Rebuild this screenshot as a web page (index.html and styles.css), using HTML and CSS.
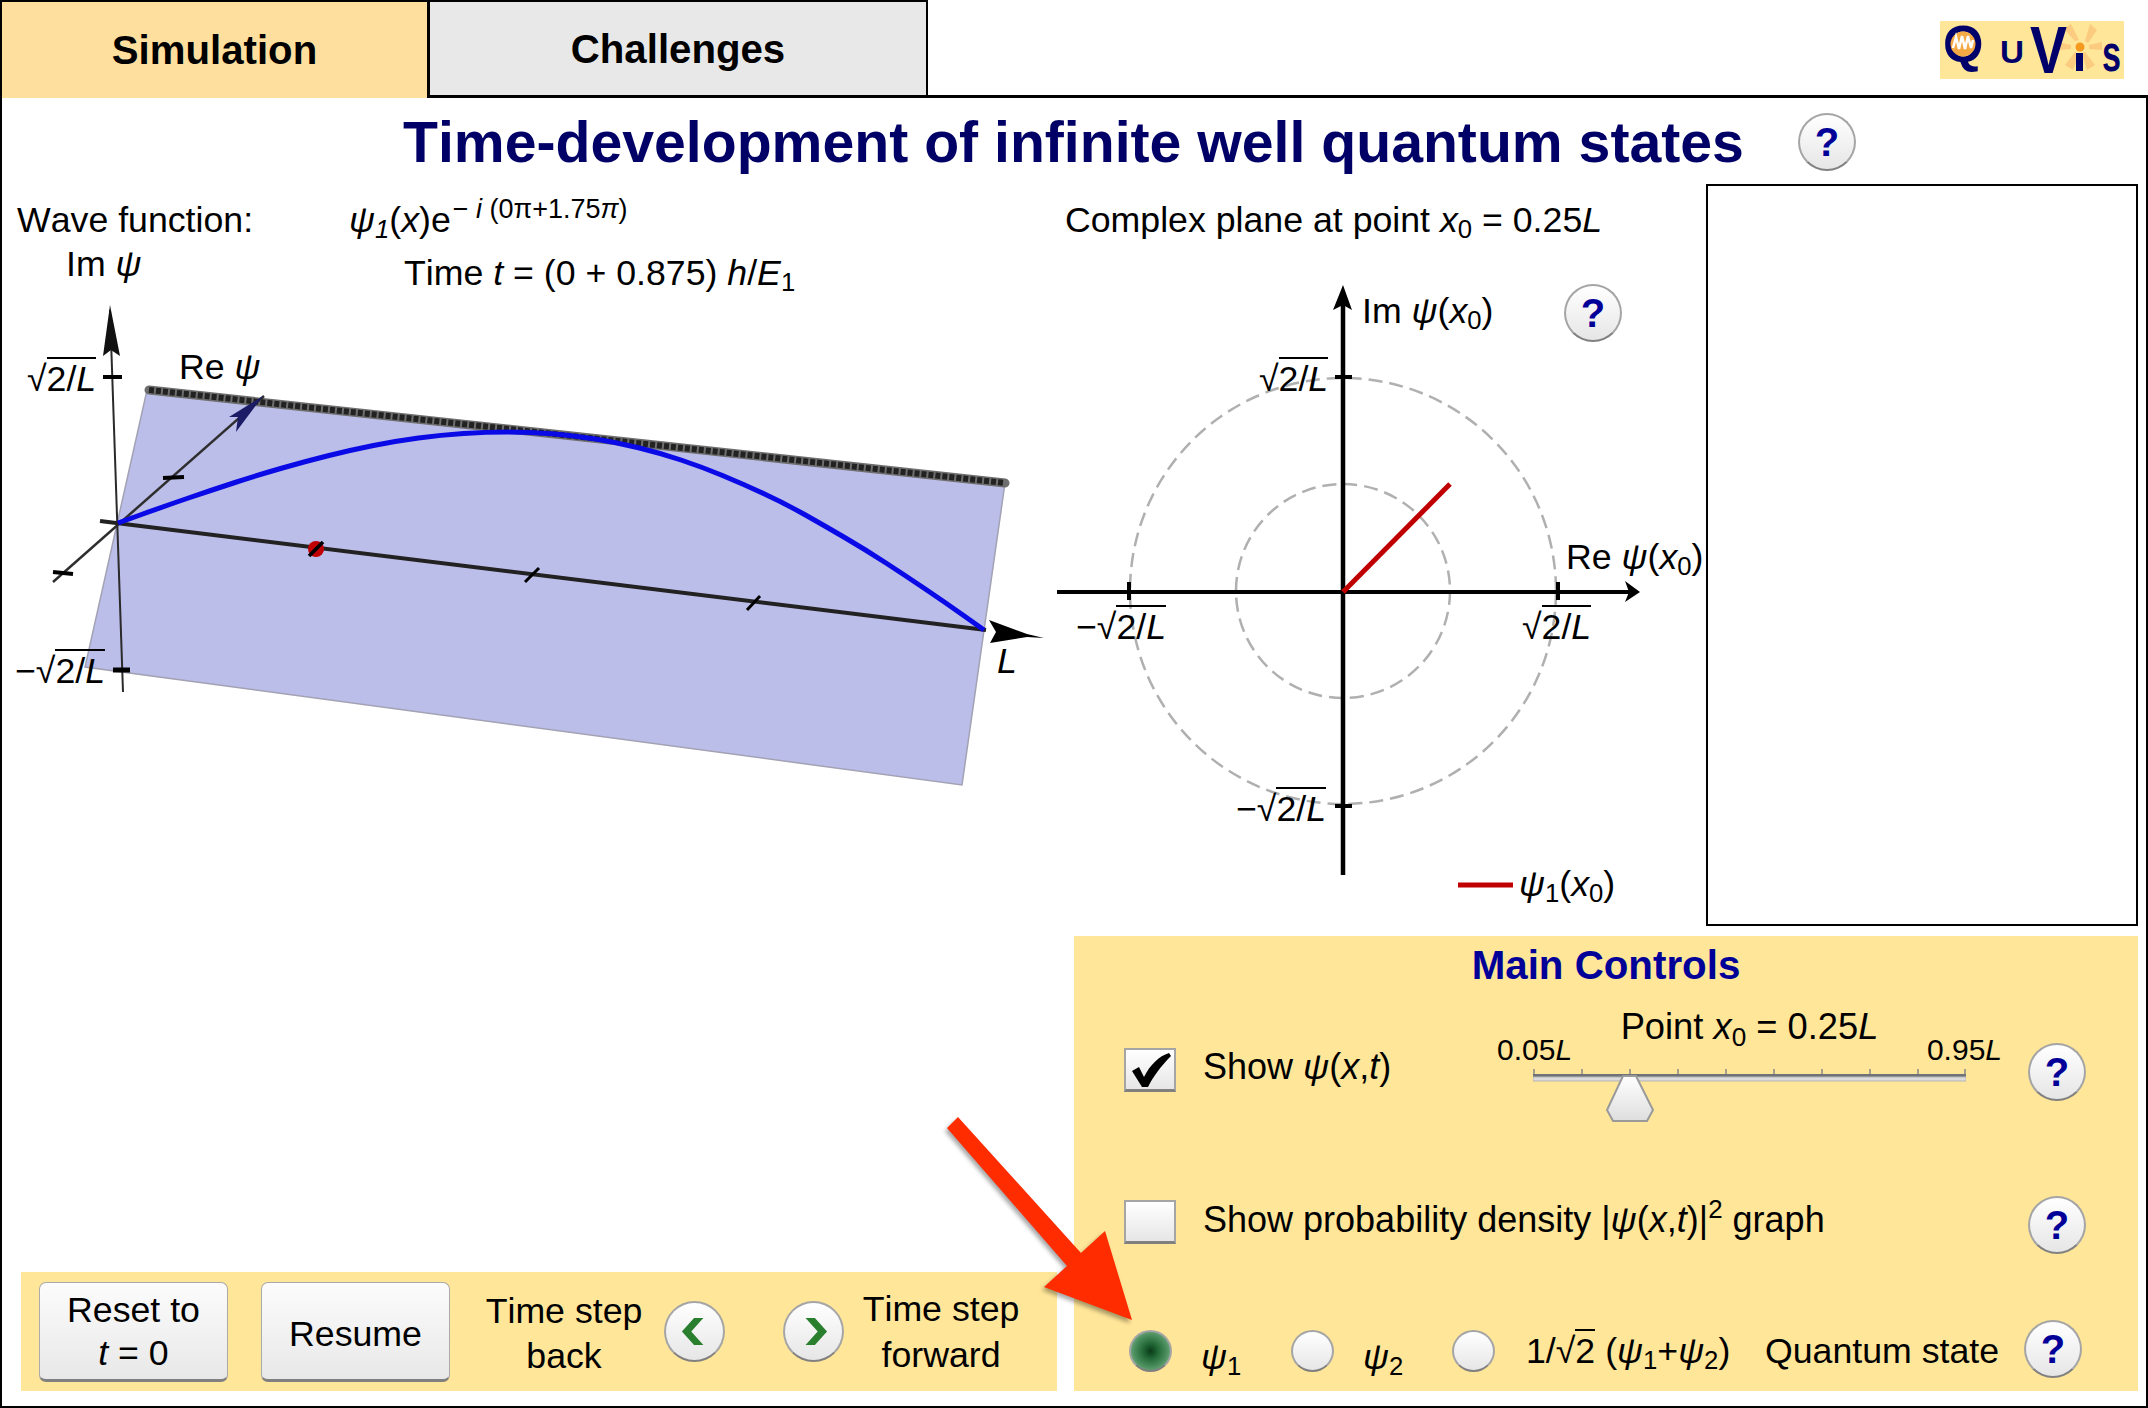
FILE: index.html
```html
<!DOCTYPE html>
<html lang="en">
<head>
    <meta charset="UTF-8">
    <meta name="viewport" content="width=device-width, initial-scale=1.0">
    <title>QuVis - Time-development of infinite well quantum states</title>
    <link rel="stylesheet" href="styles.css">
</head>
<body>
<div class="page">

    <!-- Tabs and logo -->
    <div class="tabbar">
        <div class="tab tab-active">Simulation</div>
        <div class="tab tab-other">Challenges</div>
        <div class="tabbar-rest">
            <svg class="logo" viewBox="0 0 184 58">
                <rect width="184" height="58" fill="#ffe699"/>
                <path class="logo-ray" d="M135 20 L124 8 L131 3 L139 19 Z M145 20 L150 3 L157 9 L148 22 Z M149 24 L162 21 L162 29 L149 28 Z M131 24 L118 21 L118 29 L131 28 Z M135 31 L125 44 L133 49 L139 33 Z M145 31 L155 44 L147 49 L142 33 Z"/>
                <text class="logo-letter" x="3" y="41" font-size="52">Q</text>
                <circle cx="23" cy="23" r="12.5" fill="#f5a944"/>
                <path d="M13 27 L16 16 L19 28 L22 15 L25 28 L28 15 L31 27 L33 19" fill="none" stroke="#fff" stroke-width="2.5"/>
                <text class="logo-letter" x="60" y="42" font-size="31" textLength="24" lengthAdjust="spacingAndGlyphs">U</text>
                <text class="logo-letter" x="90" y="52" font-size="67" textLength="37" lengthAdjust="spacingAndGlyphs">V</text>
                <rect x="136" y="32" width="7" height="18" fill="#00006b"/>
                <circle cx="140" cy="26" r="4.5" fill="#f59a1f"/>
                <text class="logo-letter" x="162" y="50" font-size="52" textLength="19" lengthAdjust="spacingAndGlyphs">s</text>
            </svg>
        </div>
    </div>

    <div class="frame">
        <div class="title-row">
            <h1>Time-development of infinite well quantum states</h1>
            <div class="help">?</div>
        </div>

        <div class="upper">
            <!-- 3D wave function plot -->
            <div class="plot wave-plot">
                <svg class="plot-svg" viewBox="2 184 1048 742">
                    <polygon points="147,390 1005,483 962,785 85,667" fill="#bcbeea" stroke="#a2a2b4" stroke-width="1.5"/>
                    <line x1="149" y1="390" x2="1005" y2="483" stroke="#6e6e6e" stroke-width="9" stroke-linecap="round"/>
                    <line x1="149" y1="390" x2="1005" y2="483" stroke="#222" stroke-width="6" stroke-dasharray="5 2"/>
                    <line x1="110" y1="310" x2="123" y2="692" stroke="#2a2a2a" stroke-width="2"/>
                    <polygon points="110,305 120,356 111,350 103,356" fill="#111"/>
                    <line x1="103" y1="377" x2="122" y2="377" stroke="#000" stroke-width="4"/>
                    <line x1="113" y1="670" x2="130" y2="670" stroke="#000" stroke-width="5"/>
                    <line x1="53" y1="582" x2="264" y2="396" stroke="#2e2e2e" stroke-width="2.5"/>
                    <polygon points="263,396 236,432 238,417 229,417" fill="#1c1c66"/>
                    <line x1="163" y1="478" x2="184" y2="477" stroke="#000" stroke-width="4"/>
                    <line x1="53" y1="572" x2="73" y2="574" stroke="#000" stroke-width="4"/>
                    <line x1="100" y1="521" x2="986" y2="630" stroke="#222" stroke-width="4"/>
                    <polygon points="989,620 1027,634 1044,638 1027,637 990,643 996,632" fill="#000"/>
                    <ellipse cx="316" cy="549" rx="8" ry="8" fill="#c00000"/>
                    <line x1="309" y1="556" x2="323" y2="542" stroke="#000" stroke-width="3.5"/>
                    <line x1="525" y1="582" x2="539" y2="568" stroke="#000" stroke-width="3"/>
                    <line x1="747" y1="610" x2="760" y2="596" stroke="#000" stroke-width="3"/>
                    <path class="wave-curve" d="M118 523 L141.5 514.5 Q165 506 188.5 498 Q212 490 235 482.5 Q258 475 281.5 468.25 Q305 461.5 328 455.75 Q351 450 373.5 445.5 Q396 441 418.5 438 Q441 435 463.5 433.5 Q486 432 508 432 Q530 432 552 433.75 Q574 435.5 595.5 439 Q617 442.5 638.5 447.75 Q660 453 681 460 Q702 467 722.5 475.5 Q743 484 764 493.75 Q785 503.5 805 514.75 Q825 526 845.5 538 Q866 550 886 563 Q906 576 926 589.5 Q946 603 965 616.5 L984 630"/>
                </svg>
                <div class="plot-head">
                    <span class="wave-label">Wave function:</span>
                    <span><i>ψ<sub>1</sub></i>(<i>x</i>)e<sup class="phase">− <i>i</i> (0π+1.75<i>π</i>)</sup></span>
                </div>
                <div class="time-line">Time <i>t</i> = (0 + 0.875) <i>h</i>/<i>E</i><sub>1</sub></div>
                <span class="axis-label wave-im">Im <i>ψ</i></span>
                <span class="axis-label wave-re">Re <i>ψ</i></span>
                <span class="axis-label wave-top">√<span class="radicand">2/<i>L</i></span></span>
                <span class="axis-label wave-bottom">−√<span class="radicand">2/<i>L</i></span></span>
                <span class="axis-label wave-end"><i>L</i></span>
            </div>

            <!-- Complex plane -->
            <div class="plot complex-plot">
                <svg class="plot-svg" viewBox="1050 184 656 742">
                    <circle class="guide" cx="1343" cy="591" r="213"/>
                    <circle class="guide" cx="1343" cy="591" r="107"/>
                    <line x1="1057" y1="592" x2="1630" y2="592" stroke="#000" stroke-width="4"/>
                    <polygon points="1625,581 1640,592 1625,602 1629,592" fill="#000"/>
                    <line x1="1343" y1="300" x2="1343" y2="875" stroke="#000" stroke-width="4.5"/>
                    <polygon points="1343,285 1352,310 1343,305 1333,310" fill="#000"/>
                    <line x1="1335" y1="377" x2="1352" y2="377" stroke="#000" stroke-width="4"/>
                    <line x1="1335" y1="806" x2="1352" y2="806" stroke="#000" stroke-width="4"/>
                    <line x1="1129" y1="582" x2="1129" y2="600" stroke="#000" stroke-width="4"/>
                    <line x1="1558" y1="582" x2="1558" y2="600" stroke="#000" stroke-width="4"/>
                    <line x1="1343" y1="592" x2="1450" y2="484" stroke="#c00000" stroke-width="5"/>
                    <line x1="1458" y1="885" x2="1513" y2="885" stroke="#c00000" stroke-width="5"/>
                </svg>
                <div class="plot-head complex-head"><span>Complex plane at point <i>x</i><sub>0</sub> = 0.25<i>L</i></span></div>
                <span class="axis-label plane-im">Im <i>ψ</i>(<i>x</i><sub>0</sub>)</span>
                <span class="axis-label plane-re">Re <i>ψ</i>(<i>x</i><sub>0</sub>)</span>
                <span class="axis-label plane-top">√<span class="radicand">2/<i>L</i></span></span>
                <span class="axis-label plane-left">−√<span class="radicand">2/<i>L</i></span></span>
                <span class="axis-label plane-right">√<span class="radicand">2/<i>L</i></span></span>
                <span class="axis-label plane-bottom">−√<span class="radicand">2/<i>L</i></span></span>
                <span class="axis-label plane-legend"><i>ψ</i><sub>1</sub>(<i>x</i><sub>0</sub>)</span>
                <div class="help plane-help">?</div>
            </div>

            <div class="graph-box"></div>
        </div>

        <div class="lower">
            <!-- Time controls -->
            <div class="time-bar">
                <div class="btn">Reset to<br><i>t</i> = 0</div>
                <div class="btn resume">Resume</div>
                <div class="step-label step-back">Time step<br>back</div>
                <div class="step-btn">
                    <svg viewBox="0 0 61 61"><polygon points="30,16 40,16 27,30.5 40,45 30,45 17,30.5"/></svg>
                </div>
                <div class="step-btn step-next">
                    <svg viewBox="0 0 61 61"><polygon points="22,16 32,16 45,30.5 32,45 22,45 35,30.5"/></svg>
                </div>
                <div class="step-label step-forward">Time step<br>forward</div>
            </div>

            <!-- Main controls -->
            <div class="controls">
                <div class="controls-title">Main Controls</div>

                <div class="control-row row-show">
                    <div class="checkbox">
                        <svg viewBox="0 0 48 39"><path d="M6 21 L13 17 L18 27 C24 15 33 6 43 3 L45 6 C35 16 27 27 22 37 L16 37 Z"/></svg>
                    </div>
                    <span class="check-label">Show <i>ψ</i>(<i>x</i>,<i>t</i>)</span>
                    <div class="slider">
                        <div class="slider-title">Point <i>x</i><sub>0</sub> = 0.25<i>L</i></div>
                        <div class="slider-ends"><span>0.05<i>L</i></span><span>0.95<i>L</i></span></div>
                        <svg class="slider-track" viewBox="1533 1069 433 54">
                            <defs>
                                <linearGradient id="thumb-fill" x1="0" y1="0" x2="0" y2="1">
                                    <stop offset="0" stop-color="#ffffff"/>
                                    <stop offset="1" stop-color="#dedede"/>
                                </linearGradient>
                            </defs>
                            <path d="M1534 1069V1074 M1582 1069V1074 M1630 1069V1074 M1678 1069V1074 M1726 1069V1074 M1774 1069V1074 M1822 1069V1074 M1870 1069V1074 M1918 1069V1074 M1965 1069V1074" stroke="#888" stroke-width="1.5"/>
                            <rect x="1533" y="1074" width="433" height="3" fill="#6e7378"/>
                            <rect x="1533" y="1077" width="433" height="4" fill="#dcdcdc" stroke="#b5b5b5" stroke-width="1"/>
                            <polygon points="1623,1076 1636,1076 1653,1110 1647,1121 1613,1121 1607,1110" fill="url(#thumb-fill)" stroke="#9a9a9a" stroke-width="2"/>
                        </svg>
                    </div>
                    <div class="help row-help">?</div>
                </div>

                <div class="control-row row-density">
                    <div class="checkbox"></div>
                    <span class="check-label">Show probability density |<i>ψ</i>(<i>x</i>,<i>t</i>)|<sup>2</sup> graph</span>
                    <div class="help push-right">?</div>
                </div>

                <div class="control-row row-state">
                    <div class="radio radio-on"></div>
                    <span class="state-label state-one"><i>ψ</i><sub>1</sub></span>
                    <div class="radio"></div>
                    <span class="state-label state-two"><i>ψ</i><sub>2</sub></span>
                    <div class="radio"></div>
                    <span class="state-label state-mix">1/√<span class="radicand">2</span> (<i>ψ</i><sub>1</sub>+<i>ψ</i><sub>2</sub>)</span>
                    <span class="state-label">Quantum state</span>
                    <div class="help push-right">?</div>
                </div>
            </div>
        </div>
    </div>

    <!-- Red pointer over the first radio button -->
    <svg class="pointer" viewBox="940 1110 200 220">
        <polygon points="958,1117 1081,1253 1105,1231 1132,1320 1044,1287 1067,1266 947,1128" fill="#ff2c00"/>
    </svg>
</div>
</body>
</html>
```

FILE: styles.css
```css
/* Basic Reset */
* {
    margin: 0;
    padding: 0;
    box-sizing: border-box;
}

body {
    background-color: #fff;
    color: #000;
    font-family: "Liberation Sans", Arial, sans-serif;
    font-size: 35.7px;
    line-height: 40px;
    font-kerning: none;
}

sub, sup {
    font-size: 0.72em;
    line-height: 0;
}

sub {
    vertical-align: -0.25em;
}

sup {
    vertical-align: 0.55em;
}

.page {
    position: relative;
    width: 2148px;
    height: 1408px;
    display: flex;
    flex-direction: column;
    overflow: hidden;
}

/* Tabs */
.tabbar {
    display: flex;
    height: 98px;
}

.tab {
    display: flex;
    align-items: center;
    justify-content: center;
    padding-top: 2px;
    font-size: 40.2px;
    font-weight: bold;
    border-top: 2px solid #000;
}

.tab-active {
    width: 430px;
    background-color: #ffdf9e;
    border-left: 2px solid #000;
    border-right: 3px solid #000;
}

.tab-other {
    width: 498px;
    background-color: #e8e8e8;
    border-right: 2px solid #000;
    border-bottom: 3px solid #000;
}

.tabbar-rest {
    flex: 1;
    display: flex;
    justify-content: flex-end;
    padding: 21px 24px 0 0;
    border-bottom: 3px solid #000;
}

.logo {
    width: 184px;
    height: 58px;
    overflow: visible;
}

.logo-letter {
    font-family: "Liberation Sans", Arial, sans-serif;
    font-weight: bold;
    fill: #00006b;
}

.logo-ray {
    fill: #fbcb80;
}

/* Frame around the simulation */
.frame {
    flex: 1;
    border: 2px solid #000;
    border-top: none;
}

.title-row {
    display: flex;
    align-items: center;
    height: 86px;
    padding-left: 401px;
}

h1 {
    font-size: 57.2px;
    line-height: 64px;
    padding-top: 2px;
    color: #000066;
    margin-right: 54px;
}

/* Round help button */
.help {
    width: 58px;
    height: 58px;
    display: flex;
    align-items: center;
    justify-content: center;
    flex-shrink: 0;
    font-size: 40px;
    font-weight: bold;
    color: #000099;
    border-radius: 50%;
    border: 2px solid #a5a5a5;
    border-bottom-color: #808080;
    background: linear-gradient(#ffffff, #e6e6e6);
}

.title-row .help {
    margin-top: 2px;
}

.upper {
    display: flex;
    height: 742px;
}

/* Plots: labels sit on a free canvas over the drawing */
.plot {
    position: relative;
}

.plot-svg {
    position: absolute;
    left: 0;
    top: 0;
    width: 100%;
    height: 100%;
}

.plot-head {
    position: relative;
    display: flex;
    padding: 16px 0 0 15px;
    white-space: pre;
}

.wave-plot {
    width: 1048px;
    height: 742px;
}

.wave-label {
    width: 332px;
}

.phase {
    font-size: 27px;
    vertical-align: 14px;
    margin-left: 2px;
}

.time-line {
    position: relative;
    margin: 13px 0 0 402px;
}

.wave-curve {
    fill: none;
    stroke: #0a0ae6;
    stroke-width: 5;
}

.axis-label {
    position: absolute;
    white-space: nowrap;
}

.radicand {
    border-top: 2px solid #000;
}

.wave-im { left: 64px; top: 60px; }
.wave-re { left: 177px; top: 163px; }
.wave-top { left: 25px; top: 175px; }
.wave-bottom { left: 13px; top: 467px; }
.wave-end { left: 995px; top: 457px; }

.complex-plot {
    width: 656px;
    height: 742px;
}

.guide {
    fill: none;
    stroke: #b0b0b0;
    stroke-width: 2.5;
    stroke-dasharray: 14 7;
}

.plane-im { left: 312px; top: 107px; }
.plane-re { left: 516px; top: 353px; }
.plane-top { left: 209px; top: 175px; }
.plane-left { left: 26px; top: 423px; }
.plane-right { left: 472px; top: 423px; }
.plane-bottom { left: 186px; top: 605px; }
.plane-legend { left: 469px; top: 680px; }

.plane-help {
    position: absolute;
    left: 514px;
    top: 100px;
}

.graph-box {
    width: 432px;
    height: 742px;
    border: 2px solid #000;
}

/* Lower area */
.lower {
    display: flex;
    align-items: flex-end;
    gap: 17px;
    height: 455px;
    margin-top: 10px;
    padding-left: 19px;
}

.time-bar {
    display: flex;
    align-items: center;
    width: 1036px;
    height: 119px;
    padding-left: 18px;
    background-color: #ffe699;
}

.btn {
    width: 189px;
    height: 100px;
    padding-top: 6px;
    text-align: center;
    line-height: 43px;
    border: 1px solid #aaa;
    border-bottom: 3px solid #808080;
    border-radius: 7px;
    background: linear-gradient(#fcfcfc, #e8e8e8);
}

.resume {
    margin-left: 33px;
    padding-top: 30px;
}

.step-label {
    width: 170px;
    text-align: center;
}

.step-back {
    margin-left: 29px;
    line-height: 45px;
    padding-top: 4px;
}

.step-forward {
    margin-left: 12px;
    line-height: 46px;
}

.step-btn {
    width: 61px;
    height: 61px;
    margin-left: 15px;
    border-radius: 50%;
    border: 2px solid #a5a5a5;
    border-bottom-color: #808080;
    background: linear-gradient(#ffffff, #e6e6e6);
}

.step-next {
    margin-left: 58px;
}

.step-btn svg {
    display: block;
    width: 57px;
    height: 57px;
    fill: #2a7f2f;
}

.controls {
    width: 1064px;
    height: 455px;
    padding-top: 7px;
    background-color: #ffe699;
}

.controls-title {
    font-size: 40.3px;
    line-height: 46px;
    font-weight: bold;
    text-align: center;
    color: #000099;
}

.control-row {
    display: flex;
    align-items: flex-start;
}

.row-show {
    height: 139px;
    padding: 0 52px 0 50px;
}

.row-show .checkbox {
    margin-top: 59px;
}

.row-show .check-label {
    margin-top: 58px;
}

.row-density {
    height: 59px;
    margin-top: 68px;
    padding: 0 52px 0 50px;
}

.row-density .checkbox,
.row-density .check-label {
    margin-top: 4px;
}

.row-state {
    height: 59px;
    margin-top: 65px;
    padding: 0 56px 0 55px;
}

.checkbox {
    width: 52px;
    height: 44px;
    flex-shrink: 0;
    border: 2px solid #a5a5a5;
    border-bottom: 3px solid #808080;
    background: linear-gradient(#ffffff, #e6e6e6);
}

.checkbox svg {
    display: block;
    width: 48px;
    height: 39px;
}

.check-label {
    margin-left: 27px;
    font-size: 36px;
    white-space: nowrap;
}

.slider {
    width: 505px;
    margin: 18px 0 0 auto;
}

.slider-title {
    font-size: 36.3px;
    text-align: center;
    white-space: nowrap;
}

.slider-ends {
    display: flex;
    justify-content: space-between;
    margin-top: -14px;
    font-size: 30px;
    line-height: 34px;
}

.slider-track {
    display: block;
    width: 433px;
    height: 54px;
    margin: 2px 36px 0;
}

.row-help {
    margin: 54px 0 0 26px;
}

.push-right {
    margin-left: auto;
}

.radio {
    width: 43px;
    height: 42px;
    flex-shrink: 0;
    margin-top: 10px;
    border-radius: 50%;
    border: 2px solid #a5a5a5;
    border-bottom-color: #808080;
    background: linear-gradient(#ffffff, #e6e6e6);
}

.radio-on {
    background: radial-gradient(circle, #0b3a18 0, #1f6433 25%, #4d9060 60%, #88b896 90%);
}

.state-label {
    margin-top: 11px;
    white-space: nowrap;
}

.state-one,
.state-two {
    width: 90px;
    margin: 17px 0 0 29px;
}

.state-two {
    width: 89px;
}

.state-mix {
    width: 239px;
    margin-left: 31px;
}

/* Red pointer */
.pointer {
    position: absolute;
    left: 940px;
    top: 1110px;
    width: 200px;
    height: 220px;
    filter: drop-shadow(-2px 3px 2px rgba(0, 0, 0, 0.35));
}
```
